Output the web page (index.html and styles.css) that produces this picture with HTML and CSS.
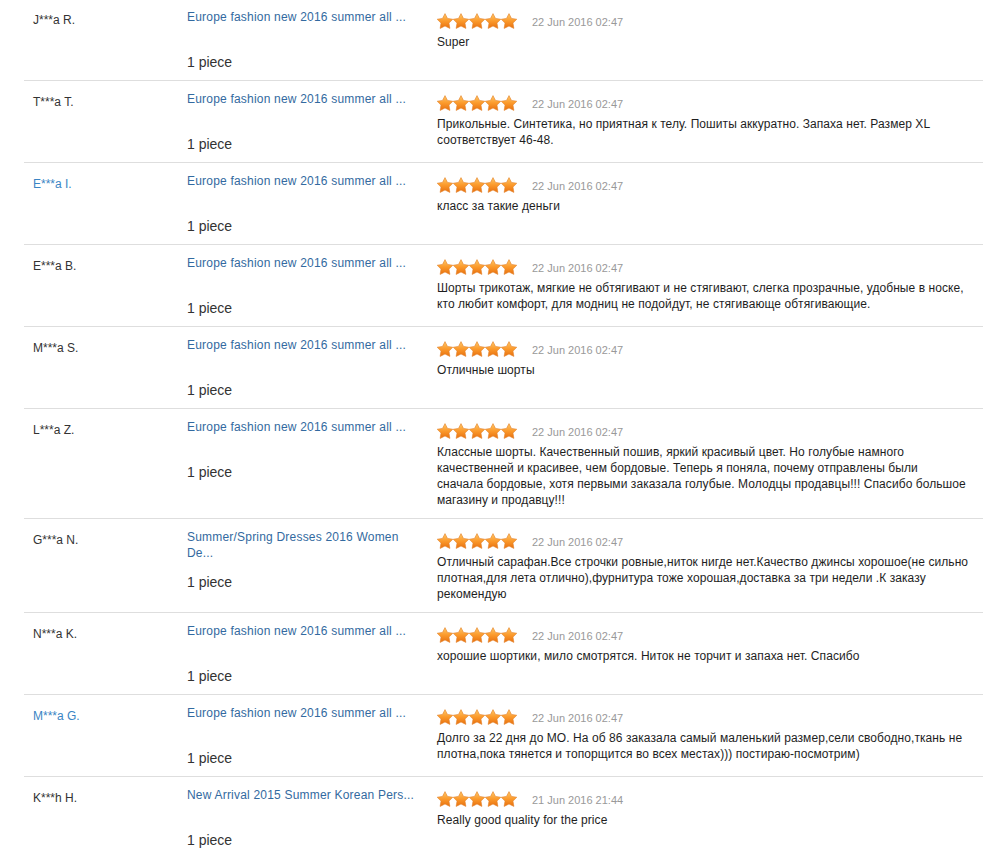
FILE: index.html
```html
<!DOCTYPE html>
<html lang="ru">
<head>
  <meta charset="UTF-8" />
  <title>Feedback</title>
  <link rel="stylesheet" href="styles.css">
</head>
<body>

<!-- star shape, used by every row -->
<svg class="defs" aria-hidden="true">
  <defs>
    <linearGradient id="starFill" x1="0" y1="0" x2="0" y2="1">
      <stop offset="0" stop-color="#ffc766"/>
      <stop offset="0.5" stop-color="#fb9a2c"/>
      <stop offset="1" stop-color="#e8700f"/>
    </linearGradient>
    <path id="star" d="M8 .6L10.47 5.4L15.8 6.24L11.99 10.1L12.88 15.4L8 13L3.12 15.4L4.01 10.1L.2 6.24L5.53 5.4Z"
      fill="url(#starFill)" stroke="#e2822a" stroke-width=".6" stroke-linejoin="round"/>
    <symbol id="stars" viewBox="0 0 80 16">
      <use href="#star" x="0"/>
      <use href="#star" x="16"/>
      <use href="#star" x="32"/>
      <use href="#star" x="48"/>
      <use href="#star" x="64"/>
    </symbol>
  </defs>
</svg>

<div class="reviews">

  <div class="review">
    <div class="buyer">J***a R.</div>
    <div class="order">
      <a class="product" href="#">Europe fashion new 2016 summer all ...</a>
      <div class="qty">1 piece</div>
    </div>
    <div class="feedback">
      <div class="meta"><svg class="stars"><use href="#stars"/></svg><span class="date">22 Jun 2016 02:47</span></div>
      <p class="text">Super</p>
    </div>
  </div>

  <div class="review">
    <div class="buyer">T***a T.</div>
    <div class="order">
      <a class="product" href="#">Europe fashion new 2016 summer all ...</a>
      <div class="qty">1 piece</div>
    </div>
    <div class="feedback">
      <div class="meta"><svg class="stars"><use href="#stars"/></svg><span class="date">22 Jun 2016 02:47</span></div>
      <p class="text">Прикольные. Синтетика, но приятная к телу. Пошиты аккуратно. Запаха нет. Размер XL соответствует 46-48.</p>
    </div>
  </div>

  <div class="review">
    <div class="buyer"><a href="#">E***a I.</a></div>
    <div class="order">
      <a class="product" href="#">Europe fashion new 2016 summer all ...</a>
      <div class="qty">1 piece</div>
    </div>
    <div class="feedback">
      <div class="meta"><svg class="stars"><use href="#stars"/></svg><span class="date">22 Jun 2016 02:47</span></div>
      <p class="text">класс за такие деньги</p>
    </div>
  </div>

  <div class="review">
    <div class="buyer">E***a B.</div>
    <div class="order">
      <a class="product" href="#">Europe fashion new 2016 summer all ...</a>
      <div class="qty">1 piece</div>
    </div>
    <div class="feedback">
      <div class="meta"><svg class="stars"><use href="#stars"/></svg><span class="date">22 Jun 2016 02:47</span></div>
      <p class="text">Шорты трикотаж, мягкие не обтягивают и не стягивают, слегка прозрачные, удобные в носке, кто любит комфорт, для модниц не подойдут, не стягивающе обтягивающие.</p>
    </div>
  </div>

  <div class="review">
    <div class="buyer">M***a S.</div>
    <div class="order">
      <a class="product" href="#">Europe fashion new 2016 summer all ...</a>
      <div class="qty">1 piece</div>
    </div>
    <div class="feedback">
      <div class="meta"><svg class="stars"><use href="#stars"/></svg><span class="date">22 Jun 2016 02:47</span></div>
      <p class="text">Отличные шорты</p>
    </div>
  </div>

  <div class="review">
    <div class="buyer">L***a Z.</div>
    <div class="order">
      <a class="product" href="#">Europe fashion new 2016 summer all ...</a>
      <div class="qty">1 piece</div>
    </div>
    <div class="feedback">
      <div class="meta"><svg class="stars"><use href="#stars"/></svg><span class="date">22 Jun 2016 02:47</span></div>
      <p class="text">Классные шорты. Качественный пошив, яркий красивый цвет. Но голубые намного качественней и красивее, чем бордовые. Теперь я поняла, почему отправлены были<br>сначала бордовые, хотя первыми заказала голубые. Молодцы продавцы!!! Спасибо большое магазину и продавцу!!!</p>
    </div>
  </div>

  <div class="review">
    <div class="buyer">G***a N.</div>
    <div class="order">
      <a class="product" href="#">Summer/Spring Dresses 2016 Women De...</a>
      <div class="qty">1 piece</div>
    </div>
    <div class="feedback">
      <div class="meta"><svg class="stars"><use href="#stars"/></svg><span class="date">22 Jun 2016 02:47</span></div>
      <p class="text">Отличный сарафан.Все строчки ровные,ниток нигде нет.Качество джинсы хорошое(не сильно плотная,для лета отлично),фурнитура тоже хорошая,доставка за три недели .К заказу рекомендую</p>
    </div>
  </div>

  <div class="review">
    <div class="buyer">N***a K.</div>
    <div class="order">
      <a class="product" href="#">Europe fashion new 2016 summer all ...</a>
      <div class="qty">1 piece</div>
    </div>
    <div class="feedback">
      <div class="meta"><svg class="stars"><use href="#stars"/></svg><span class="date">22 Jun 2016 02:47</span></div>
      <p class="text">хорошие шортики, мило смотрятся. Ниток не торчит и запаха нет. Спасибо</p>
    </div>
  </div>

  <div class="review">
    <div class="buyer"><a href="#">M***a G.</a></div>
    <div class="order">
      <a class="product" href="#">Europe fashion new 2016 summer all ...</a>
      <div class="qty">1 piece</div>
    </div>
    <div class="feedback">
      <div class="meta"><svg class="stars"><use href="#stars"/></svg><span class="date">22 Jun 2016 02:47</span></div>
      <p class="text">Долго за 22 дня до МО. На об 86 заказала самый маленький размер,сели свободно,ткань не плотна,пока тянется и топорщится во всех местах))) постираю-посмотрим)</p>
    </div>
  </div>

  <div class="review">
    <div class="buyer">K***h H.</div>
    <div class="order">
      <a class="product" href="#">New Arrival 2015 Summer Korean Pers...</a>
      <div class="qty">1 piece</div>
    </div>
    <div class="feedback">
      <div class="meta"><svg class="stars"><use href="#stars"/></svg><span class="date">21 Jun 2016 21:44</span></div>
      <p class="text">Really good quality for the price</p>
    </div>
  </div>

</div>

</body>
</html>
```

FILE: styles.css
```css
body {
  margin: 0;
  background: #fff;
  font-family: "Liberation Sans", Arial, sans-serif;
  font-size: 12px;
  color: #333;
}
a {
  text-decoration: none;
}
.defs {
  position: absolute;
  width: 0;
  height: 0;
  overflow: hidden;
}
.reviews {
  margin: -1px 0 0 24px;
  width: 959px;
}
.review {
  display: grid;
  grid-template-columns: 154px 250px 1fr;
  padding: 10px 0 9px 9px;
  border-bottom: 1px solid #dedede;
}
.buyer {
  padding-top: 3px;
  line-height: 16px;
}
.buyer a {
  color: #3a85c4;
}
.order {
  display: flex;
  flex-direction: column;
  width: 232px;
}
.product {
  color: #336aa0;
  line-height: 16px;
  min-height: 44px;
  letter-spacing: 0.2px;
}
.qty {
  font-size: 14px;
  line-height: 18px;
  color: #333;
}
.feedback {
  padding: 4px 12px 1px 0;
}
.meta {
  display: flex;
  align-items: center;
  gap: 15px;
  height: 16px;
}
.stars {
  width: 80px;
  height: 16px;
  display: block;
}
.date {
  font-size: 11px;
  color: #999;
  padding-top: 1px;
}
.text {
  margin: 5px 0 0;
  line-height: 16px;
  color: #1e1e1e;
  letter-spacing: 0.07px;
}
```
